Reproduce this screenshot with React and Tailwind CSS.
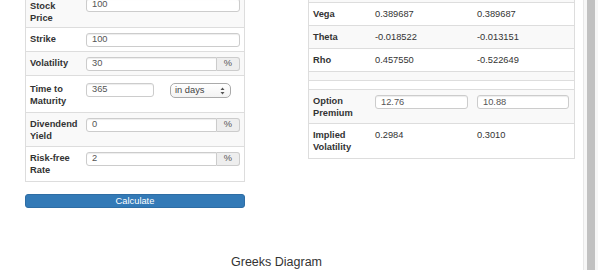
import React from "react";

const inputCls =
  "h-[14px] w-full border border-[#ccc] rounded-[3px] bg-white pl-[5px] flex items-center text-[#555] shadow-[inset_0_1px_1px_rgba(0,0,0,0.075)]";

function FormRow({ label, striped, labelPad = "pt-[5px]", cellPad = "pt-[5px]", bottom = "pb-[4px]", children }) {
  return (
    <div
      className={`grid grid-cols-[55px_1fr] border-t border-[#ddd] ${striped ? "bg-[#f9f9f9]" : "bg-white"}`}
    >
      <div className={`pl-[4px] pr-[2px] ${labelPad} ${bottom} font-bold leading-[12px]`}>{label}</div>
      <div className={`pl-[5px] pr-[4px] ${cellPad} ${bottom}`}>{children}</div>
    </div>
  );
}

function PctInput({ value }) {
  return (
    <div className="flex h-[14px]">
      <div className="flex-1 h-[14px] border border-[#ccc] rounded-l-[3px] bg-white pl-[5px] flex items-center text-[#555] shadow-[inset_0_1px_1px_rgba(0,0,0,0.075)]">
        {value}
      </div>
      <div className="w-[23px] h-[14px] border border-l-0 border-[#ccc] rounded-r-[3px] bg-[#eee] flex items-center justify-center text-[#555]">
        %
      </div>
    </div>
  );
}

function GreekRow({ name, call, put, striped }) {
  return (
    <div
      className={`grid grid-cols-[61px_102px_1fr] border-t border-[#ddd] leading-[12px] ${striped ? "bg-[#f9f9f9]" : "bg-white"}`}
    >
      <div className="pl-[4px] pt-[5px] pb-[5px] font-bold">{name}</div>
      <div className="pl-[5px] pt-[5px] pb-[5px]">{call}</div>
      <div className="pl-[5px] pt-[5px] pb-[5px]">{put}</div>
    </div>
  );
}

export default function App() {
  return (
    <div className="flex h-[270px] w-[604px] overflow-hidden bg-white text-[#333] text-[9.3px] font-['Liberation_Sans',Arial,sans-serif]">
      <div className="w-[583px] flex flex-col">
        <div className="flex items-start">
          {/* inputs */}
          <div className="ml-[25px] w-[220px] -mt-[9px]">
            <div className="border-b border-x border-[#ddd]">
              <FormRow label="Stock Price" striped labelPad="pt-[8px]" cellPad="pt-[6px]" bottom="pb-[3px]">
                <div className={inputCls}>100</div>
              </FormRow>
              <FormRow label="Strike">
                <div className={inputCls}>100</div>
              </FormRow>
              <FormRow label="Volatility" striped>
                <PctInput value="30" />
              </FormRow>
              <FormRow label="Time to Maturity" labelPad="pt-[7px]" cellPad="pt-[7px]" bottom="pb-[5px]">
                <div className="flex items-start">
                  <div className={`${inputCls} !w-[68px]`}>365</div>
                  <div className="ml-[16px] w-[61px] h-[15px] border border-[#aaa] rounded-[5px] bg-gradient-to-b from-white to-[#f3f3f3] flex items-center justify-between pl-[4px] pr-[5px] text-[#444]">
                    <span>in days</span>
                    <svg width="5" height="8" viewBox="0 0 5 8">
                      <path d="M2.5 0.5 L4.5 3 H0.5 Z M2.5 7.5 L4.5 5 H0.5 Z" fill="#555" />
                    </svg>
                  </div>
                </div>
              </FormRow>
              <FormRow label="Divendend Yield" striped>
                <PctInput value="0" />
              </FormRow>
              <FormRow label="Risk-free Rate" bottom="pb-[5px]">
                <PctInput value="2" />
              </FormRow>
            </div>
            <button className="mt-[12px] w-full h-[14px] rounded-[3px] bg-[#337ab7] border border-[#2e6da4] text-white leading-[12px] flex items-center justify-center">
              Calculate
            </button>
          </div>

          {/* greeks table */}
          <div className="ml-[63px] w-[267px] -mt-[10px] border border-[#ddd] bg-white">
            <div className="h-[11px] bg-[#f9f9f9]" />
            <GreekRow name="Vega" call="0.389687" put="0.389687" />
            <GreekRow name="Theta" call="-0.018522" put="-0.013151" striped />
            <GreekRow name="Rho" call="0.457550" put="-0.522649" />
            <div className="h-[9px] border-t border-[#ddd] bg-[#f9f9f9]" />
            <div className="h-[9px] border-t border-[#ddd] bg-white" />
            <div className="grid grid-cols-[61px_102px_1fr] border-t border-[#ddd] bg-[#f9f9f9] leading-[12px]">
              <div className="pl-[4px] pt-[5px] pb-[4px] font-bold">Option Premium</div>
              <div className="pl-[5px] pr-[4px] pt-[5px]">
                <div className={inputCls}>12.76</div>
              </div>
              <div className="pl-[5px] pr-[5px] pt-[5px]">
                <div className={inputCls}>10.88</div>
              </div>
            </div>
            <div className="grid grid-cols-[61px_102px_1fr] border-t border-[#ddd] leading-[12px]">
              <div className="pl-[4px] pt-[5px] pb-[5px] font-bold">Implied Volatility</div>
              <div className="pl-[5px] pt-[5px]">0.2984</div>
              <div className="pl-[5px] pt-[5px]">0.3010</div>
            </div>
          </div>
        </div>

        <h3 className="mt-[47px] w-[553px] text-center text-[12.5px] leading-[15px] font-medium text-[#333]">
          Greeks Diagram
        </h3>
      </div>

      {/* scrollbar */}
      <div className="w-[15px] h-full border-l border-[#e8e8e8] bg-[#f7f7f7] flex justify-center">
        <div className="w-[8px] h-full bg-[#c1c1c1]" />
      </div>
    </div>
  );
}
